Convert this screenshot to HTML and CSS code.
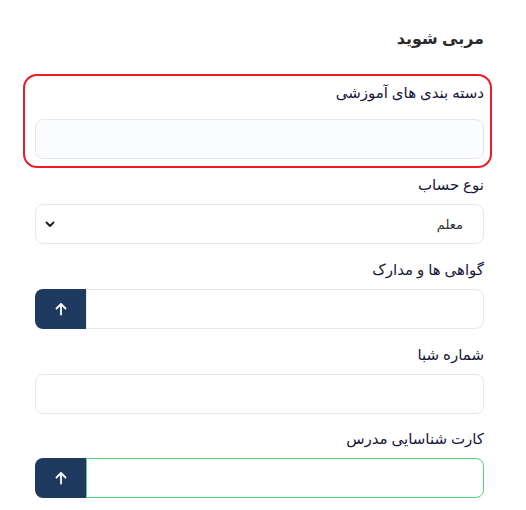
FILE: index.html
```html
<!DOCTYPE html>
<html lang="fa" dir="rtl">
<head>
<meta charset="utf-8">
<title>مربی شوید</title>
<link rel="stylesheet" href="styles.css">
</head>
<body>
<main class="page">
  <h2 class="title">مربی شوید</h2>

  <div class="group group-highlight">
    <label class="label label-first">دسته بندی های آموزشی</label>
    <div class="input input-soft"></div>
  </div>

  <div class="group group-after">
    <label class="label">نوع حساب</label>
    <div class="input select">
      <span class="select-value">معلم</span>
      <svg class="chevron" width="10" height="7" viewBox="0 0 10 7"><path d="M1.5 1.5 L5 5 L8.5 1.5" fill="none" stroke="#222" stroke-width="2" stroke-linecap="round" stroke-linejoin="round"/></svg>
    </div>
  </div>

  <div class="group">
    <label class="label">گواهی ها و مدارک</label>
    <div class="file">
      <div class="file-field"></div>
      <button class="file-btn" type="button">
        <svg width="14" height="14" viewBox="0 0 14 14"><path d="M7 12.5 V2 M2.5 6.5 L7 2 L11.5 6.5" fill="none" stroke="#fff" stroke-width="1.8" stroke-linecap="round" stroke-linejoin="round"/></svg>
      </button>
    </div>
  </div>

  <div class="group">
    <label class="label">شماره شبا</label>
    <div class="input"></div>
  </div>

  <div class="group group-last">
    <label class="label">کارت شناسایی مدرس</label>
    <div class="file">
      <div class="file-field file-field-valid"></div>
      <button class="file-btn" type="button">
        <svg width="14" height="14" viewBox="0 0 14 14"><path d="M7 12.5 V2 M2.5 6.5 L7 2 L11.5 6.5" fill="none" stroke="#fff" stroke-width="1.8" stroke-linecap="round" stroke-linejoin="round"/></svg>
      </button>
    </div>
  </div>
</main>
</body>
</html>
```

FILE: styles.css
```css
* { box-sizing: border-box; }

html, body {
  margin: 0;
  padding: 0;
  background: #ffffff;
}

body {
  font-family: "Noto Sans", "DejaVu Sans", sans-serif;
  color: #16183a;
}

.page {
  width: 526px;
  padding: 26px 42px 0 35px;
  display: flex;
  flex-direction: column;
}

.title {
  margin: 0 0 24px 0;
  font-size: 16px;
  line-height: 24px;
  font-weight: 700;
  color: #2b2b2b;
}

.group {
  display: flex;
  flex-direction: column;
  margin-bottom: 13px;
}

.group-highlight {
  margin: 0 -8px 0 -12px;
  padding: 4px 6px 7px 10px;
  border: 2px solid #ec1c24;
  border-radius: 14px;
}

.group-after {
  margin-top: 4px;
}

.group-last {
  margin-top: -1px;
}

.label {
  display: block;
  font-size: 15px;
  line-height: 24px;
  margin-bottom: 8px;
  color: #16183a;
}

.label-first {
  margin-bottom: 15px;
}

.input {
  height: 40px;
  border: 1px solid #e7e8ec;
  border-radius: 8px;
  background: #ffffff;
}

.input-soft {
  background: #fbfcfe;
}

.select {
  display: flex;
  align-items: center;
  justify-content: space-between;
  padding: 0 20px 0 9px;
}

.select-value {
  font-size: 13px;
  color: #333333;
}

.chevron {
  display: block;
}

.file {
  display: flex;
  height: 40px;
}

.file-field {
  flex: 1;
  border: 1px solid #e7e8ec;
  border-radius: 0 8px 8px 0;
}

.file-field-valid {
  border-color: #4cd47c;
}

.file-btn {
  width: 51px;
  border: none;
  padding: 0;
  margin: 0;
  background: #1f3a5f;
  border-radius: 8px 0 0 8px;
  display: flex;
  align-items: center;
  justify-content: center;
}
```
